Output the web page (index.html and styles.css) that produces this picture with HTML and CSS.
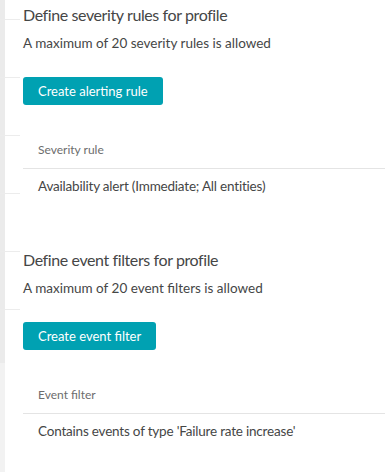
FILE: index.html
```html
<!DOCTYPE html>
<html lang="en">
  <head>
    <meta charset="UTF-8" />
    <meta name="viewport" content="width=device-width, initial-scale=1.0" />
    <title>Alerting profile</title>
    <link rel="stylesheet" href="styles.css">
  </head>
  <body>
    <div class="page">
      <div class="nav">
        <div class="nav-item first"></div>
        <div class="nav-item"></div>
        <div class="nav-item"></div>
        <div class="nav-item"></div>
        <div class="nav-item"></div>
        <div class="nav-item"></div>
      </div>
      <div class="content">
        <div class="section">
          <h2 class="title">Define severity rules for profile</h2>
          <p class="note">A maximum of 20 severity rules is allowed</p>
          <button class="btn">Create alerting rule</button>
          <div class="table">
            <div class="table-head">Severity rule</div>
            <div class="table-row">Availability alert (Immediate; All entities)</div>
          </div>
        </div>
        <div class="section">
          <h2 class="title">Define event filters for profile</h2>
          <p class="note">A maximum of 20 event filters is allowed</p>
          <button class="btn">Create event filter</button>
          <div class="table">
            <div class="table-head">Event filter</div>
            <div class="table-row">Contains events of type 'Failure rate increase'</div>
          </div>
        </div>
      </div>
    </div>
  </body>
</html>
```

FILE: styles.css
```css
body {
  margin: 0;
  font-family: Lato, "Open Sans", sans-serif;
  color: #454646;
  background: linear-gradient(to right, #f2f2f2 5px, #fff 5px);
}

.page {
  display: flex;
  min-height: 472px;
}

.nav {
  width: 20px;
  flex-shrink: 0;
  align-self: flex-start;
  height: 363px;
  background: linear-gradient(to right, #ebebeb 5px, transparent 5px);
}

.nav-item {
  height: 57px;
  border-bottom: 1px solid #ececec;
}

.nav-item.first {
  height: 19px;
}

.content {
  flex: 1;
  padding: 3px 0 0 3px;
}

.section {
  height: 245px;
}

.title {
  margin: 0;
  font-size: 16px;
  font-weight: 400;
  line-height: 24px;
  letter-spacing: -0.4px;
}

.note {
  margin: 7px 0 0;
  font-size: 13.5px;
  line-height: 18px;
}

.btn {
  display: block;
  margin-top: 25px;
  height: 28px;
  padding: 0 15px;
  border: none;
  border-radius: 3px;
  background-color: #00a1b2;
  color: #fff;
  font-family: inherit;
  font-size: 13px;
}

.table {
  margin-top: 36px;
}

.table-head {
  padding: 0 15px 9px;
  font-size: 12px;
  line-height: 18px;
  color: #6d6d6d;
  border-bottom: 1px solid #e4e4e4;
}

.table-row {
  padding: 7px 15px;
  font-size: 13.5px;
  line-height: 20px;
  letter-spacing: -0.2px;
}
```
